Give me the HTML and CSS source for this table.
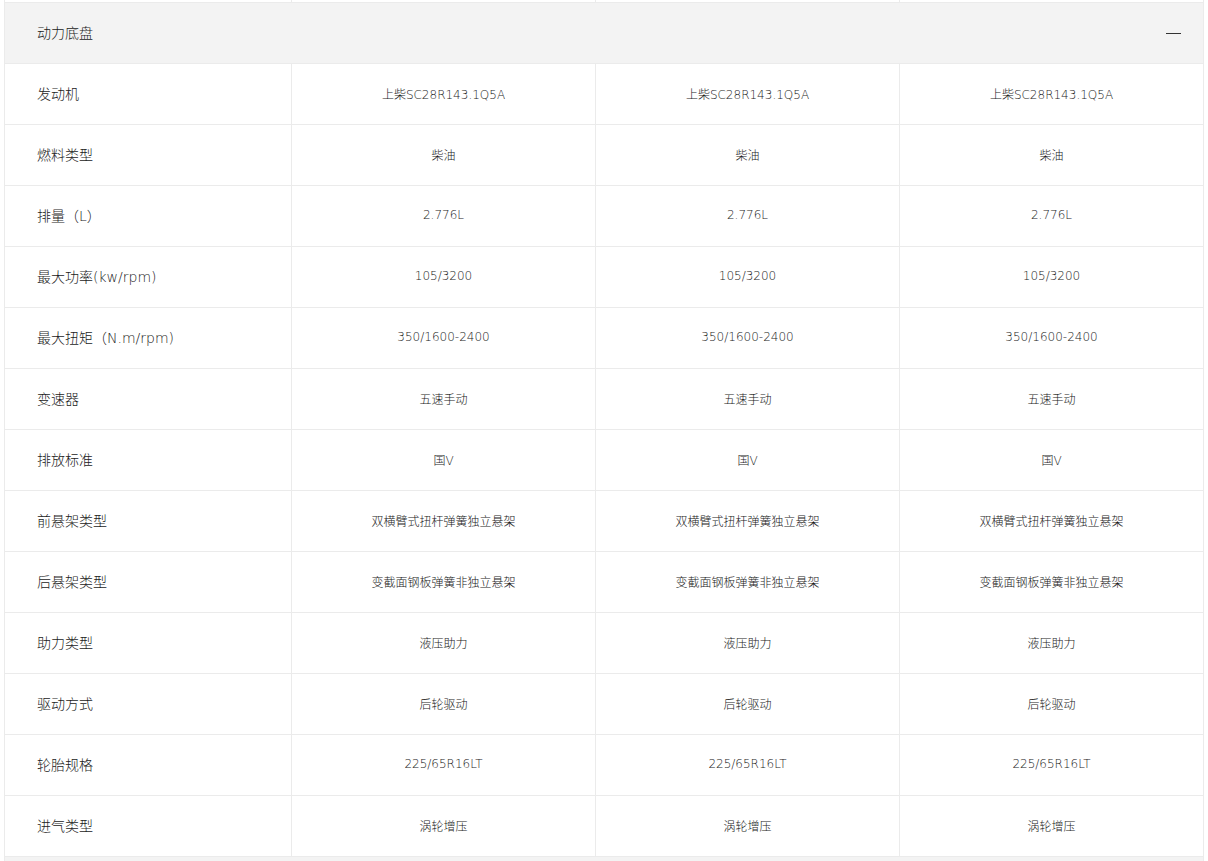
FILE: index.html
```html
<!DOCTYPE html>
<html lang="zh-CN">
<head>
<meta charset="utf-8">
<title>动力底盘</title>
<link rel="stylesheet" href="styles.css">
</head>
<body>
<div class="spec">
  <div class="row stub">
    <div class="cell label"></div><div class="cell"></div><div class="cell"></div><div class="cell"></div>
  </div>
  <div class="section-head">
    <span class="section-title">动力底盘</span>
    <span class="collapse" aria-label="收起"></span>
  </div>
  <div class="row"><div class="cell label">发动机</div><div class="cell">上柴SC28R143.1Q5A</div><div class="cell">上柴SC28R143.1Q5A</div><div class="cell">上柴SC28R143.1Q5A</div></div>
  <div class="row"><div class="cell label">燃料类型</div><div class="cell">柴油</div><div class="cell">柴油</div><div class="cell">柴油</div></div>
  <div class="row"><div class="cell label">排量（L）</div><div class="cell">2.776L</div><div class="cell">2.776L</div><div class="cell">2.776L</div></div>
  <div class="row"><div class="cell label">最大功率(kw/rpm)</div><div class="cell">105/3200</div><div class="cell">105/3200</div><div class="cell">105/3200</div></div>
  <div class="row"><div class="cell label">最大扭矩（N.m/rpm)</div><div class="cell">350/1600-2400</div><div class="cell">350/1600-2400</div><div class="cell">350/1600-2400</div></div>
  <div class="row"><div class="cell label">变速器</div><div class="cell">五速手动</div><div class="cell">五速手动</div><div class="cell">五速手动</div></div>
  <div class="row"><div class="cell label">排放标准</div><div class="cell">国V</div><div class="cell">国V</div><div class="cell">国V</div></div>
  <div class="row"><div class="cell label">前悬架类型</div><div class="cell">双横臂式扭杆弹簧独立悬架</div><div class="cell">双横臂式扭杆弹簧独立悬架</div><div class="cell">双横臂式扭杆弹簧独立悬架</div></div>
  <div class="row"><div class="cell label">后悬架类型</div><div class="cell">变截面钢板弹簧非独立悬架</div><div class="cell">变截面钢板弹簧非独立悬架</div><div class="cell">变截面钢板弹簧非独立悬架</div></div>
  <div class="row"><div class="cell label">助力类型</div><div class="cell">液压助力</div><div class="cell">液压助力</div><div class="cell">液压助力</div></div>
  <div class="row"><div class="cell label">驱动方式</div><div class="cell">后轮驱动</div><div class="cell">后轮驱动</div><div class="cell">后轮驱动</div></div>
  <div class="row"><div class="cell label">轮胎规格</div><div class="cell">225/65R16LT</div><div class="cell">225/65R16LT</div><div class="cell">225/65R16LT</div></div>
  <div class="row"><div class="cell label">进气类型</div><div class="cell">涡轮增压</div><div class="cell">涡轮增压</div><div class="cell">涡轮增压</div></div>
  <div class="section-head next"></div>
</div>
</body>
</html>
```
FILE: styles.css
```css
html, body {
  margin: 0;
  padding: 0;
  background: #fff;
}

body {
  font-family: "DejaVu Sans", "Noto Sans CJK SC", sans-serif;
  font-weight: 300;
  color: #1a1a1a;
}

.spec {
  margin-left: 4px;
  width: 1200px;
  border-left: 1px solid #ebebeb;
  box-sizing: border-box;
}

.row {
  display: grid;
  grid-template-columns: 287px 304px 304px 304px;
  height: 61px;
  border-bottom: 1px solid #ebebeb;
  box-sizing: border-box;
}

.row.stub {
  height: 3px;
}

.cell {
  border-right: 1px solid #ebebeb;
  display: flex;
  align-items: center;
  justify-content: center;
  font-size: 12px;
  padding-bottom: 2px;
}

.row.stub .cell {
  padding: 0;
}

.cell.label {
  justify-content: flex-start;
  padding-left: 32px;
  font-size: 14px;
}

.section-head {
  display: flex;
  align-items: center;
  justify-content: space-between;
  height: 61px;
  background: #f3f3f3;
  border-right: 1px solid #ebebeb;
  border-bottom: 1px solid #ebebeb;
  box-sizing: border-box;
  padding: 0 22px 2px 32px;
}

.section-head.next {
  height: 10px;
  border-bottom: none;
}

.section-title {
  font-size: 14px;
}

.collapse {
  width: 15px;
  height: 1px;
  background: #333;
  margin-top: 2px;
}
```
